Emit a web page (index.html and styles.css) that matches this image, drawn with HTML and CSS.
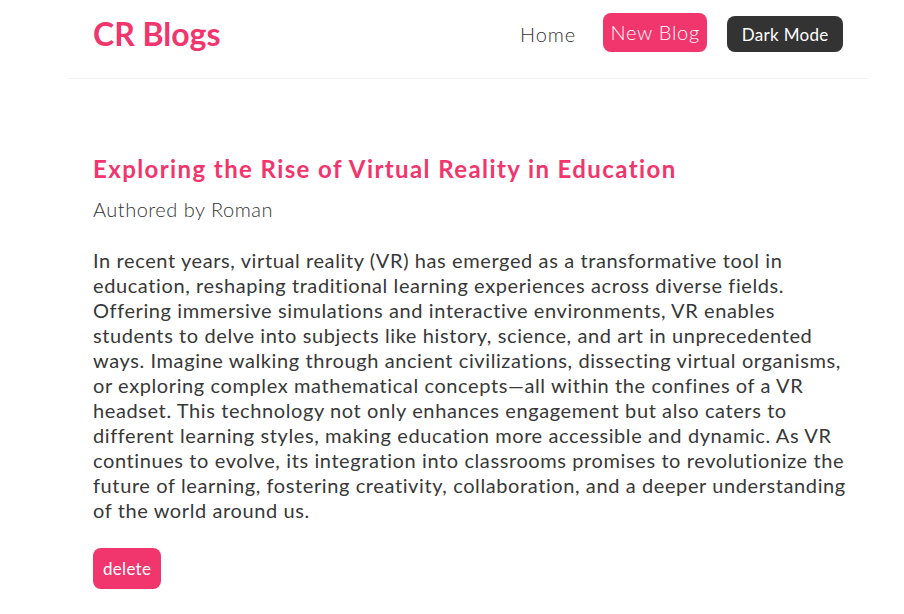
FILE: index.html
```html
<!DOCTYPE html>
<html lang="en">
<head>
<meta charset="utf-8">
<title>CR Blogs</title>
<link rel="stylesheet" href="styles.css">
</head>
<body>
<div class="app">
  <nav class="navbar">
    <h1 class="brand">CR Blogs</h1>
    <div class="links">
      <a href="#" class="link">Home</a>
      <a href="#" class="link link-new">New Blog</a>
      <button class="dark-btn">Dark Mode</button>
    </div>
  </nav>
  <div class="content">
    <article class="blog-details">
      <h2 class="title">Exploring the Rise of Virtual Reality in Education</h2>
      <p class="author">Authored by Roman</p>
      <div class="body">In recent years, virtual reality (VR) has emerged as a transformative tool in education, reshaping traditional learning experiences across diverse fields. Offering immersive simulations and interactive environments, VR enables students to delve into subjects like history, science, and art in unprecedented ways. Imagine walking through ancient civilizations, dissecting virtual organisms, or exploring complex mathematical concepts—all within the confines of a VR headset. This technology not only enhances engagement but also caters to different learning styles, making education more accessible and dynamic. As VR continues to evolve, its integration into classrooms promises to revolutionize the future of learning, fostering creativity, collaboration, and a deeper understanding of the world around us.</div>
      <button class="delete-btn">delete</button>
    </article>
  </div>
</div>
</body>
</html>
```
FILE: styles.css
```css
* { box-sizing: border-box; }
html, body { margin: 0; padding: 0; background: #fff; }
body {
  font-family: Lato, "Noto Sans", sans-serif;
  color: #333;
}
.app { width: 800px; margin-left: 68px; }
.navbar {
  display: flex;
  align-items: center;
  height: 79px;
  padding: 0 25px 11px;
  border-bottom: 1px solid #f2f2f2;
}
.brand {
  margin: 0;
  font-size: 32px;
  font-weight: 700;
  color: #f1356d;
  line-height: 1;
}
.links { margin-left: auto; display: flex; align-items: center; }
.link {
  font-size: 20px;
  font-weight: 300;
  letter-spacing: 0.9px;
  color: #333;
  text-decoration: none;
  padding: 6px 8px;
  margin-left: 20px;
}
.link-new {
  background: #f1356d;
  color: #fff;
  border-radius: 8px;
  letter-spacing: 0.7px;
  padding: 7px 7.5px 8px;
  margin-left: 19px;
  margin-top: -2px;
}
.dark-btn {
  margin-left: 20px;
  background: #333;
  color: #fff;
  border: 0;
  border-radius: 8px;
  font-family: inherit;
  font-size: 17px;
  letter-spacing: 0.3px;
  height: 36px;
  padding: 0 14.5px;
  margin-top: 1px;
}
.content { padding: 75px 17px 20px 25px; }
.title {
  margin: 0 0 12px;
  font-size: 24px;
  font-weight: 700;
  letter-spacing: 1.4px;
  color: #f1356d;
  line-height: 30px;
}
.author {
  margin: 0;
  font-size: 20px;
  font-weight: 300;
  letter-spacing: 0.5px;
  line-height: 26px;
}
.body {
  margin: 26px 0 25px;
  font-size: 20px;
  font-weight: 400;
  letter-spacing: 0.6px;
  line-height: 25px;
  color: #383838;
}
.delete-btn {
  background: #f1356d;
  color: #fff;
  border: 0;
  border-radius: 8px;
  font-family: inherit;
  font-size: 17px;
  letter-spacing: 0.3px;
  height: 41px;
  padding: 0 10px;
}
```
